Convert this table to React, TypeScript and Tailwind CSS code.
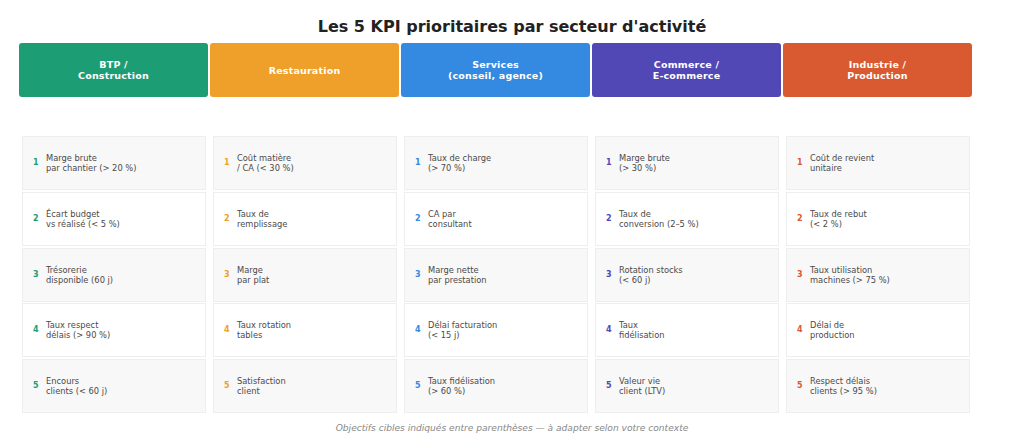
const sectors = [
  {
    title: ["BTP /", "Construction"],
    head: "bg-[#1d9d74]",
    num: "text-[#1d9d74]",
    kpis: [
      ["Marge brute", "par chantier (> 20 %)"],
      ["Écart budget", "vs réalisé (< 5 %)"],
      ["Trésorerie", "disponible (60 j)"],
      ["Taux respect", "délais (> 90 %)"],
      ["Encours", "clients (< 60 j)"],
    ],
  },
  {
    title: ["Restauration"],
    head: "bg-[#efa02a]",
    num: "text-[#efa02a]",
    kpis: [
      ["Coût matière", "/ CA (< 30 %)"],
      ["Taux de", "remplissage"],
      ["Marge", "par plat"],
      ["Taux rotation", "tables"],
      ["Satisfaction", "client"],
    ],
  },
  {
    title: ["Services", "(conseil, agence)"],
    head: "bg-[#3489e0]",
    num: "text-[#3489e0]",
    kpis: [
      ["Taux de charge", "(> 70 %)"],
      ["CA par", "consultant"],
      ["Marge nette", "par prestation"],
      ["Délai facturation", "(< 15 j)"],
      ["Taux fidélisation", "(> 60 %)"],
    ],
  },
  {
    title: ["Commerce /", "E-commerce"],
    head: "bg-[#5148b5]",
    num: "text-[#5148b5]",
    kpis: [
      ["Marge brute", "(> 30 %)"],
      ["Taux de", "conversion (2–5 %)"],
      ["Rotation stocks", "(< 60 j)"],
      ["Taux", "fidélisation"],
      ["Valeur vie", "client (LTV)"],
    ],
  },
  {
    title: ["Industrie /", "Production"],
    head: "bg-[#d95a30]",
    num: "text-[#d95a30]",
    kpis: [
      ["Coût de revient", "unitaire"],
      ["Taux de rebut", "(< 2 %)"],
      ["Taux utilisation", "machines (> 75 %)"],
      ["Délai de", "production"],
      ["Respect délais", "clients (> 95 %)"],
    ],
  },
];

export default function App() {
  return (
    <div className="w-[1024px] h-[444px] bg-white font-['DejaVu_Sans',sans-serif] overflow-hidden">
      {/* Title */}
      <h1 className="pt-[17px] text-center text-[16px] leading-[20px] font-bold text-[#222]">
        Les 5 KPI prioritaires par secteur d'activité
      </h1>

      {/* Sector headers */}
      <div className="mt-[6px] ml-[19px] grid grid-cols-[repeat(5,189px)] gap-x-[2px]">
        {sectors.map((s) => (
          <div
            key={s.title.join()}
            className={`${s.head} h-[54px] rounded-[3px] flex flex-col items-center justify-center text-white font-bold text-[9.5px] leading-[11px] tracking-[0.2px]`}
          >
            {s.title.map((t) => (
              <span key={t}>{t}</span>
            ))}
          </div>
        ))}
      </div>

      {/* KPI grid */}
      <div className="mt-[39px] ml-[19px] grid grid-cols-[repeat(5,189px)] gap-x-[2px]">
        {sectors.map((s) => (
          <div key={s.title.join()} className="flex flex-col gap-y-[1.75px] ml-[3px] mr-[2px]">
            {s.kpis.map((k, i) => (
              <div
                key={i}
                className={`h-[54px] border border-[#eeeeee] flex items-center pl-[10px] gap-[8px] ${
                  i % 2 === 0 ? "bg-[#f8f8f8]" : "bg-white"
                }`}
              >
                <span className={`${s.num} font-bold text-[8px] w-[5px]`}>{i + 1}</span>
                <div className="flex flex-col text-[8.3px] leading-[10px] text-[#4a4a4a]">
                  <span>{k[0]}</span>
                  <span>{k[1]}</span>
                </div>
              </div>
            ))}
          </div>
        ))}
      </div>

      {/* Footer note */}
      <p className="mt-[9px] text-center italic text-[9.1px] leading-[12px] text-[#888]">
        Objectifs cibles indiqués entre parenthèses — à adapter selon votre contexte
      </p>
    </div>
  );
}
